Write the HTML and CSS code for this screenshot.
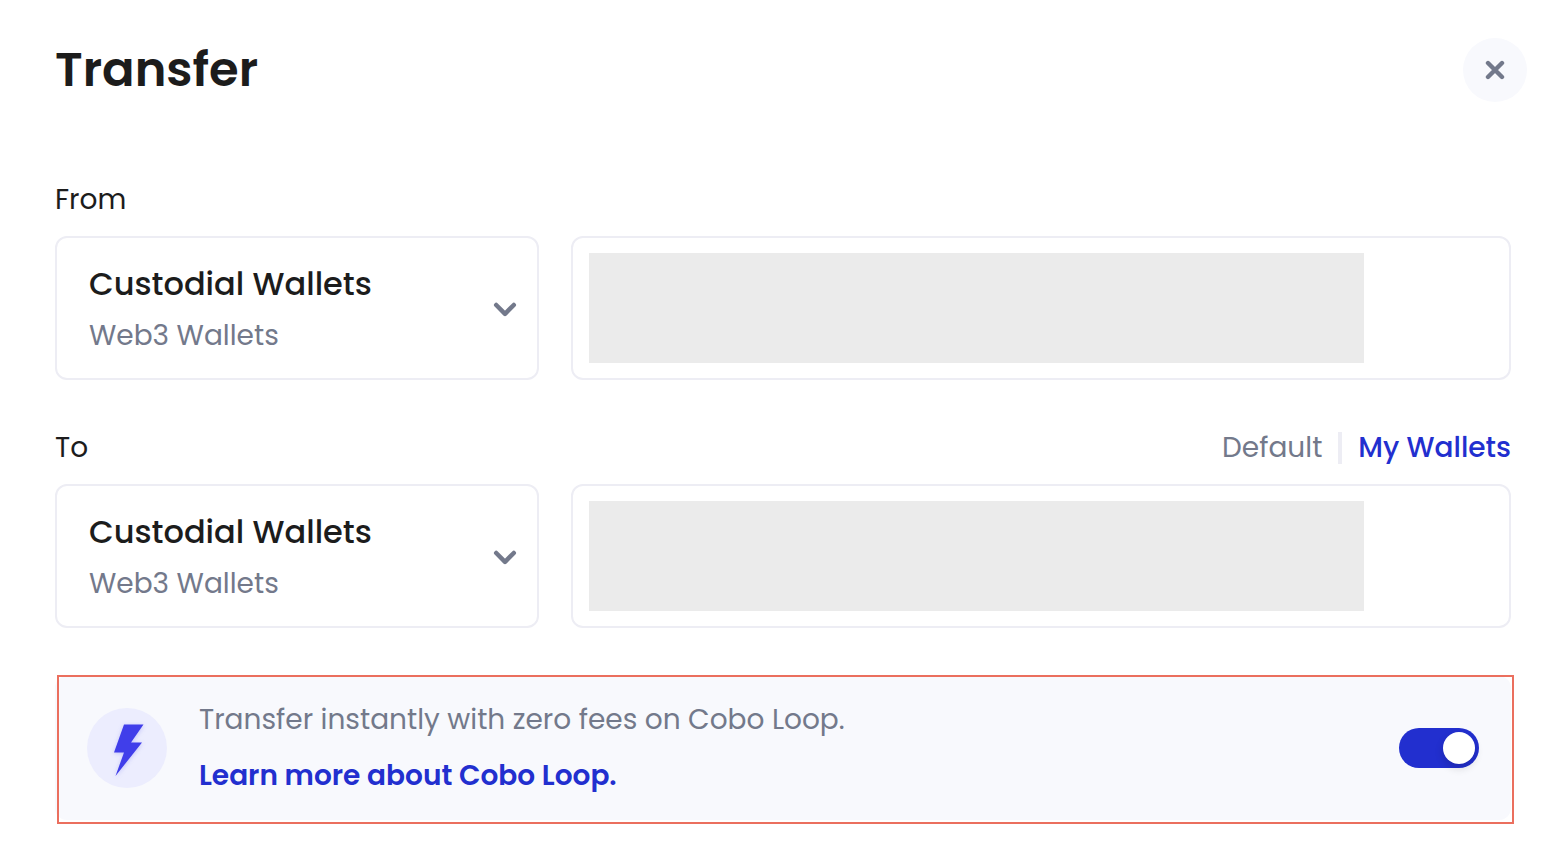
FILE: index.html
```html
<!DOCTYPE html>
<html lang="en">
<head>
<meta charset="utf-8">
<meta name="viewport" content="width=device-width, initial-scale=1">
<title>Transfer</title>
<link rel="stylesheet" href="styles.css">
</head>
<body>
<main class="transfer">
  <header class="header">
    <h1 class="title">Transfer</h1>
    <button class="close" type="button" aria-label="Close">
      <svg width="20" height="20" viewBox="0 0 20 20" fill="none" stroke="currentColor" stroke-width="4.400" stroke-linecap="round" aria-hidden="true"><path d="M3 3 17 17M17 3 3 17"/></svg>
    </button>
  </header>

  <section class="group" aria-labelledby="from-label">
    <div class="group-head">
      <h2 class="label" id="from-label">From</h2>
    </div>
    <div class="fields">
      <button class="picker" type="button" aria-haspopup="listbox">
        <span class="picker-text">
          <span class="picker-name">Custodial Wallets</span>
          <span class="picker-type">Web3 Wallets</span>
        </span>
        <svg class="chevron" width="24" height="24" viewBox="0 0 24 24" fill="none" stroke="currentColor" stroke-width="4.500" stroke-linecap="round" stroke-linejoin="round" aria-hidden="true"><path d="M3.200 9 12 17.800 20.800 9"/></svg>
      </button>
      <div class="wallet"><div class="mask"></div></div>
    </div>
  </section>

  <section class="group" aria-labelledby="to-label">
    <div class="group-head">
      <h2 class="label" id="to-label">To</h2>
      <div class="tabs">
        <button class="tab" type="button">Default</button>
        <span class="divider"></span>
        <button class="tab tab-active" type="button">My Wallets</button>
      </div>
    </div>
    <div class="fields">
      <button class="picker" type="button" aria-haspopup="listbox">
        <span class="picker-text">
          <span class="picker-name">Custodial Wallets</span>
          <span class="picker-type">Web3 Wallets</span>
        </span>
        <svg class="chevron" width="24" height="24" viewBox="0 0 24 24" fill="none" stroke="currentColor" stroke-width="4.500" stroke-linecap="round" stroke-linejoin="round" aria-hidden="true"><path d="M3.200 9 12 17.800 20.800 9"/></svg>
      </button>
      <div class="wallet"><div class="mask"></div></div>
    </div>
  </section>

  <section class="loop">
    <span class="loop-icon">
      <svg class="bolt" width="80" height="80" viewBox="0 0 80 80" aria-hidden="true"><path fill="#403eea" d="M37 16.500H56.500L44 34.500H55L28.500 68 37 44.500H27Z"/></svg>
    </span>
    <div class="loop-text">
      <label class="loop-note" for="loop-toggle">Transfer instantly with zero fees on Cobo Loop.</label>
      <a class="loop-link" href="#">Learn more about Cobo Loop.</a>
    </div>
    <input class="toggle" id="loop-toggle" type="checkbox" role="switch" checked>
  </section>
</main>
</body>
</html>
```
FILE: styles.css
```css
* {
  box-sizing: border-box;
}

body {
  margin: 0;
  background: #fff;
  color: #1c1c1c;
  font-family: Poppins, Inter, "Liberation Sans", sans-serif;
  font-size: 28px;
  line-height: 32px;
}

button {
  padding: 0;
  border: 0;
  background: none;
  color: inherit;
  font: inherit;
  text-align: left;
  cursor: pointer;
}

.transfer {
  padding: 38px 53px 30px 55px;
}

.header {
  display: flex;
  align-items: center;
  justify-content: space-between;
  margin-right: -16px;
  margin-bottom: 82px;
}

.title {
  margin: 0;
  font-size: 48px;
  font-weight: 600;
  line-height: 64px;
}

.close {
  display: grid;
  place-items: center;
  width: 64px;
  height: 64px;
  border-radius: 50%;
  background: #f8f9fd;
  color: #73798b;
}

.group {
  margin-bottom: 52px;
}

.group + .loop {
  margin-top: -4px;
}

.group-head {
  display: flex;
  justify-content: space-between;
  margin-bottom: 20px;
}

.label {
  margin: 0;
  font-size: 28px;
  font-weight: 400;
}

.tabs {
  display: flex;
  gap: 16px;
}

.tab {
  color: #73798b;
}

.tab-active {
  color: #222fcf;
  font-weight: 500;
}

.divider {
  width: 4px;
  background: #ededf4;
}

.fields {
  display: grid;
  grid-template-columns: minmax(0, 484fr) minmax(0, 940fr);
  gap: 32px;
}

.picker,
.wallet {
  display: flex;
  align-items: center;
  border: 2px solid #ededf4;
  border-radius: 12px;
}

.picker {
  justify-content: space-between;
  padding: 22px 20px 22px 32px;
}

.picker-text {
  display: flex;
  flex-direction: column;
  gap: 8px;
}

.picker-name {
  font-size: 32px;
  font-weight: 500;
  line-height: 48px;
}

.picker-type {
  color: #73798b;
  line-height: 40px;
}

.chevron {
  flex: none;
  color: #73798b;
}

.wallet {
  padding: 0 16px;
}

.mask {
  width: 100%;
  max-width: 775px;
  height: 110px;
  background: #ebebeb;
}

.loop {
  position: relative;
  display: flex;
  align-items: center;
  gap: 32px;
  padding: 16px 32px;
  border-radius: 12px;
  background: #f8f9fd;
}

.loop::after {
  content: "";
  position: absolute;
  inset: -1px -3px -4px 2px;
  border: 2px solid #eb6f5e;
  pointer-events: none;
}

.loop-icon {
  flex: none;
  width: 80px;
  height: 80px;
  border-radius: 50%;
  background: #ecedfe;
}

.bolt {
  display: block;
  filter: drop-shadow(0 1px 2px rgba(64, 62, 234, 0.25));
}

.loop-text {
  display: flex;
  flex: 1;
  flex-direction: column;
  align-items: flex-start;
  line-height: 56px;
}

.loop-note {
  color: #73798b;
}

.loop-link {
  color: #222fcf;
  font-weight: 600;
  text-decoration: none;
}

.toggle {
  display: flex;
  flex: none;
  align-items: center;
  justify-content: flex-end;
  width: 80px;
  height: 40px;
  margin: 0;
  padding: 4px;
  border-radius: 20px;
  background: #222fcf;
  appearance: none;
  cursor: pointer;
}

.toggle::before {
  content: "";
  width: 32px;
  height: 32px;
  border-radius: 50%;
  background: #fff;
  box-shadow: 0 4px 8px rgba(0, 0, 0, 0.16);
}

.toggle:not(:checked) {
  justify-content: flex-start;
  background: #c6c9d4;
}
```
